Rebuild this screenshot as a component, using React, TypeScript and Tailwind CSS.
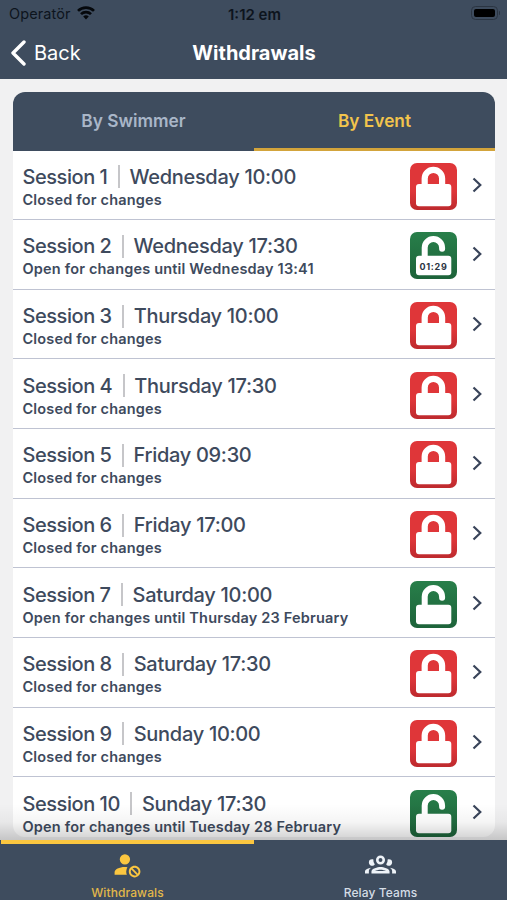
import clsx from 'clsx';

interface Session {
  id: number;
  day: string;
  // deadline text, only set while the session is open
  openUntil?: string;
  countdown?: string;
}

const sessions: Session[] = [
  {id: 1, day: 'Wednesday 10:00'},
  {id: 2, day: 'Wednesday 17:30', openUntil: 'Wednesday 13:41', countdown: '01:29'},
  {id: 3, day: 'Thursday 10:00'},
  {id: 4, day: 'Thursday 17:30'},
  {id: 5, day: 'Friday 09:30'},
  {id: 6, day: 'Friday 17:00'},
  {id: 7, day: 'Saturday 10:00', openUntil: 'Thursday 23 February'},
  {id: 8, day: 'Saturday 17:30'},
  {id: 9, day: 'Sunday 10:00'},
  {id: 10, day: 'Sunday 17:30', openUntil: 'Tuesday 28 February'},
];

function WifiIcon() {
  return (
    <svg viewBox="0 0 18 14" className="w-[18px] h-[14px]" fill="none" stroke="#05080c" strokeWidth="2.7">
      <path d="M1 4.9a11.4 11.4 0 0 1 16 0" />
      <path d="M4 8.1a7.1 7.1 0 0 1 10 0" />
      <path d="M9 13.4 6.2 10.5a4 4 0 0 1 5.6 0Z" fill="#05080c" stroke="none" />
    </svg>
  );
}

function StatusBar() {
  return (
    <div className="h-[26px] pl-[9px] pr-[7px] grid grid-cols-[1fr_auto_1fr] items-center text-[#0d141d]">
      <div className="flex items-center gap-[6px] pt-[2px]">
        <span className="text-[14.5px] leading-none tracking-[0.1px]">Operatör</span>
        <span className="-mt-[2px]"><WifiIcon /></span>
      </div>
      <span className="pt-[2px] text-center text-[15px] leading-none font-semibold">1:12 em</span>
      <div className="flex items-center justify-end gap-px">
        <div className="w-[27px] h-[14px] rounded-[4.5px] border border-[#2b3542] p-[2px]">
          <div className="h-full rounded-[2px] bg-black" />
        </div>
        <div className="w-[1.5px] h-[4px] rounded-r bg-[#2b3542]" />
      </div>
    </div>
  );
}

function NavBar() {
  return (
    <div className="h-[53px] pl-px grid grid-cols-[1fr_auto_1fr] items-center text-white">
      <div className="flex items-center pl-[9px] gap-[8px]">
        <svg viewBox="0 0 16 26" className="w-4 h-[26px]" fill="none" stroke="currentColor" strokeWidth="3.4" strokeLinecap="round" strokeLinejoin="round">
          <path d="M14 2 3 13l11 11" />
        </svg>
        <span className="text-[20px] leading-6">Back</span>
      </div>
      <h1 className="text-[20px] leading-6 font-bold">Withdrawals</h1>
    </div>
  );
}

function LockBadge({open, countdown}: {open: boolean; countdown?: string}) {
  return (
    <div
      className={clsx(
        'relative w-[47px] h-[47px] mt-[3px] shrink-0 rounded-[7px] bg-linear-to-b',
        open ? 'from-[#287f4a] to-[#1d633a]' : 'from-[#df3639] from-60% to-[#bd2a2e]',
      )}
    >
      <svg viewBox="0 0 47 47" className="w-full h-full" fill="white">
        {open ? (
          <>
            <path d="M14.7 27V15.8a8.7 8.7 0 0 1 17.4 0v1" fill="none" stroke="white" strokeWidth="6" strokeLinecap="round" />
            <rect x="6" y="23.8" width="35.3" height="19.5" rx="3" />
          </>
        ) : (
          <>
            <path d="M14.7 24v-8.5a8.7 8.7 0 0 1 17.4 0V24" fill="none" stroke="white" strokeWidth="6.2" />
            <rect x="6" y="21" width="35.3" height="22.3" rx="3" />
          </>
        )}
      </svg>
      {countdown && (
        <span className="absolute inset-x-0 top-[29px] text-center text-[9px] leading-[11px] font-bold tracking-[0.7px] text-[#2b3442]">
          {countdown}
        </span>
      )}
    </div>
  );
}

function SessionRow({session}: {session: Session}) {
  const open = session.openUntil !== undefined;

  return (
    <li className="h-[69.65px] flex items-center pl-[9.5px] pr-[13.5px] border-b border-[#bfc3d2] text-[#3e4a5d]">
      <div className="flex-1 pt-[4px]">
        <div className="flex items-center text-[20px] leading-6 font-medium">
          <span className="tracking-[-0.45px]">Session {session.id}</span>
          <span className="w-[2px] h-[23px] ml-[10.5px] mr-[9.5px] bg-[#c6c6c9]" />
          <span className="tracking-[-0.3px]">{session.day}</span>
        </div>
        <p className="mt-[2px] text-[14.5px] leading-[18px] font-semibold tracking-[0.18px]">
          {open ? `Open for changes until ${session.openUntil}` : 'Closed for changes'}
        </p>
      </div>
      <LockBadge open={open} countdown={session.countdown} />
      <svg viewBox="0 0 10 16" className="ml-[14.5px] w-[10px] h-4" fill="none" stroke="#39445a" strokeWidth="2.2">
        <path d="M1.5 1.5 8.3 8l-6.8 6.5" />
      </svg>
    </li>
  );
}

function AccountCancelIcon() {
  return (
    <svg viewBox="0 0 24 24" className="w-[31px] h-[31px]" fill="currentColor">
      <path d="M10 4A4 4 0 0 0 6 8A4 4 0 0 0 10 12A4 4 0 0 0 14 8A4 4 0 0 0 10 4M17.5 13C15 13 13 15 13 17.5C13 20 15 22 17.5 22C20 22 22 20 22 17.5C22 15 20 13 17.5 13M10 14C5.58 14 2 15.79 2 18V20H11.5A6.5 6.5 0 0 1 11 17.5A6.5 6.5 0 0 1 11.95 14.14C11.32 14.06 10.68 14 10 14M17.5 14.5C19.16 14.5 20.5 15.84 20.5 17.5C20.5 18.08 20.33 18.62 20.04 19.08L15.92 14.96C16.38 14.67 16.92 14.5 17.5 14.5M14.96 15.92L19.08 20.04C18.62 20.33 18.08 20.5 17.5 20.5C15.84 20.5 14.5 19.16 14.5 17.5C14.5 16.92 14.67 16.38 14.96 15.92Z" />
    </svg>
  );
}

function AccountGroupIcon() {
  return (
    <svg viewBox="0 0 24 24" className="w-[31px] h-[31px]" fill="currentColor">
      <path d="M12 5A3.5 3.5 0 0 0 8.5 8.5A3.5 3.5 0 0 0 12 12A3.5 3.5 0 0 0 15.5 8.5A3.5 3.5 0 0 0 12 5M12 7A1.5 1.5 0 0 1 13.5 8.5A1.5 1.5 0 0 1 12 10A1.5 1.5 0 0 1 10.5 8.5A1.5 1.5 0 0 1 12 7M5.5 8A2.5 2.5 0 0 0 3 10.5C3 11.44 3.53 12.25 4.29 12.68C4.65 12.88 5.06 13 5.5 13C5.94 13 6.35 12.88 6.71 12.68C7.08 12.47 7.39 12.17 7.62 11.81C6.89 10.86 6.5 9.7 6.5 8.5V8.22C6.2 8.08 5.86 8 5.5 8M18.5 8C18.14 8 17.8 8.08 17.5 8.22V8.5C17.5 9.7 17.11 10.86 16.38 11.81C16.5 12 16.63 12.15 16.78 12.3C16.94 12.45 17.1 12.58 17.29 12.68C17.65 12.88 18.06 13 18.5 13C18.94 13 19.35 12.88 19.71 12.68C20.47 12.25 21 11.44 21 10.5A2.5 2.5 0 0 0 18.5 8M12 14C9.66 14 5 15.17 5 17.5V19H19V17.5C19 15.17 14.34 14 12 14M4.71 14.55C2.78 14.78 0 15.76 0 17.5V19H3V17.07C3 16.06 3.69 15.22 4.71 14.55M19.29 14.55C20.31 15.22 21 16.06 21 17.07V19H24V17.5C24 15.76 21.22 14.78 19.29 14.55M12 16C13.53 16 15.24 16.5 16.23 17H7.77C8.76 16.5 10.47 16 12 16Z" />
    </svg>
  );
}

function TabBar() {
  return (
    <nav className="h-[60px] pl-px shrink-0 grid grid-cols-2 bg-[#3e4c5e] text-[12px] leading-4 font-medium tracking-[0.1px]">
      <div className="flex flex-col items-center border-t-4 border-[#fbc640] text-[#fbc640]">
        <div className="mt-[5px]"><AccountCancelIcon /></div>
        <span className="mt-[5px] text-[#e2b84a]">Withdrawals</span>
      </div>
      <div className="flex flex-col items-center pt-[9px] text-[#eef3f8]">
        <AccountGroupIcon />
        <span className="mt-[5px] text-[#d5dde6]">Relay Teams</span>
      </div>
    </nav>
  );
}

export default function App() {
  return (
    <div className="w-[507px] h-[900px] flex flex-col overflow-hidden bg-[#f1f1f2] font-['Inter',sans-serif]">
      <header className="h-[79px] shrink-0 bg-[#3e4c5e]">
        <StatusBar />
        <NavBar />
      </header>

      <main className="relative flex-1 min-h-0 pl-[13px] pr-[12px] pt-[12.5px] overflow-hidden">
        <div className="h-[745px] rounded-[12px] overflow-hidden bg-white">
          <div className="h-[59px] grid grid-cols-2 bg-[#3e4c5e] text-center text-[17.3px] leading-[54px] font-semibold">
            <div className="pt-[2px] text-[#a9b6c8]">By Swimmer</div>
            <div className="pt-[2px] border-b-[3px] border-[#d3a43b] text-[#f2c44c]">By Event</div>
          </div>
          <ul>
            {sessions.map((session) => (
              <SessionRow key={session.id} session={session} />
            ))}
          </ul>
        </div>
        <div className="absolute inset-x-0 bottom-0 h-[36px] bg-linear-to-b from-black/0 via-black/4 to-black/18" />
      </main>

      <TabBar />
    </div>
  );
}
